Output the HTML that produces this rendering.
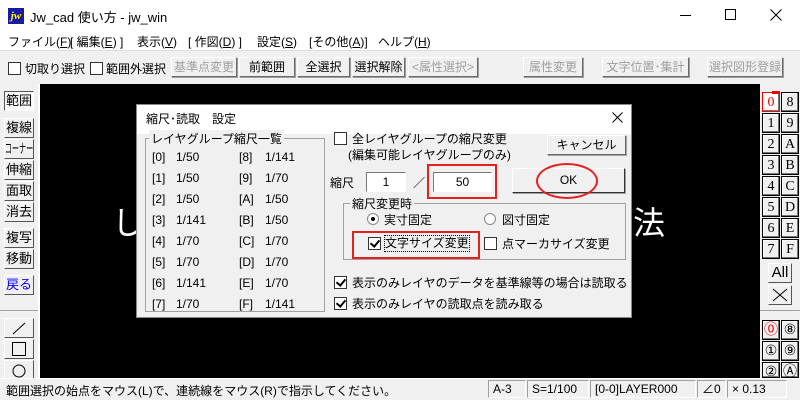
<!DOCTYPE html>
<html><head><meta charset="utf-8"><style>
*{box-sizing:border-box;margin:0;padding:0}
body{width:800px;height:400px;overflow:hidden;background:#f0f0f0;font-family:"Liberation Sans","Noto Sans CJK JP","IPAGothic",sans-serif;font-size:12px;color:#000;position:relative}
.a{position:absolute;white-space:nowrap}
.btn{position:absolute;background:#f0f0f0;border:1px solid;border-color:#fff #696969 #696969 #fff;box-shadow:1px 1px 0 #a0a0a0;text-align:center;line-height:18px;font-size:12px}
.dis{color:#a0a0a0}
.cb{position:absolute;width:13px;height:13px;border:1px solid #333;background:#fff}
.ck::after{content:"";position:absolute;left:3px;top:0px;width:4px;height:7px;border:solid #000;border-width:0 2px 2px 0;transform:rotate(40deg)}
.lb{position:absolute;width:30px;height:20px;background:#f0f0f0;border:1px solid;border-color:#fff #555 #555 #fff;text-align:center;line-height:18px;font-size:13px;overflow:hidden}
.rb{position:absolute;width:18px;height:20px;background:#f0f0f0;border:1px solid #000;box-shadow:inset -1px -1px 0 #777,inset 1px 1px 0 #fff;text-align:center;line-height:19px;font-family:"Liberation Serif",serif;font-size:14px}
.sf{position:absolute;top:380px;height:18px;border:1px solid;border-color:#a0a0a0 #fff #fff #a0a0a0;line-height:16px;padding-left:4px;font-size:12px}
.c{position:absolute;line-height:21px;font-size:12px}
</style></head><body>
<div class="a" style="left:0;top:0;width:800px;height:30px;background:#fff"></div>
<div class="a" style="left:8px;top:8px;width:16px;height:16px;background:#1a1aa0;color:#ff0;font:italic bold 11px 'Liberation Serif',serif;line-height:16px;text-align:center">jw</div>
<div class="a" style="left:30px;top:7px;font-size:13px">Jw_cad 使い方 - jw_win</div>
<div class="a" style="left:680px;top:15px;width:11px;height:1px;background:#000"></div>
<div class="a" style="left:725px;top:9px;width:11px;height:11px;border:1px solid #000"></div>
<svg class="a" style="left:770px;top:9px" width="12" height="12"><path d="M0.5 0.5L11.5 11.5M11.5 0.5L0.5 11.5" stroke="#000" stroke-width="1"/></svg>
<div class="a" style="left:0;top:30px;width:800px;height:20px;background:#fff"></div>
<div class="a" style="left:8px;top:33px">ファイル(<u>F</u>)</div>
<div class="a" style="left:70px;top:33px">[ 編集(<u>E</u>) ]</div>
<div class="a" style="left:137px;top:33px">表示(<u>V</u>)</div>
<div class="a" style="left:188px;top:33px">[ 作図(<u>D</u>) ]</div>
<div class="a" style="left:257px;top:33px">設定(<u>S</u>)</div>
<div class="a" style="left:309px;top:33px">[その他(<u>A</u>)]</div>
<div class="a" style="left:378px;top:33px">ヘルプ(<u>H</u>)</div>
<div class="a" style="left:0;top:50px;width:800px;height:1px;background:#ddd"></div>
<div class="cb" style="left:8px;top:62px"></div><div class="a" style="left:25px;top:60px">切取り選択</div>
<div class="cb" style="left:90px;top:62px"></div><div class="a" style="left:106px;top:60px">範囲外選択</div>
<div class="btn dis" style="left:171px;top:57px;width:66px;height:20px">基準点変更</div>
<div class="btn" style="left:239px;top:57px;width:56px;height:20px">前範囲</div>
<div class="btn" style="left:297px;top:57px;width:53px;height:20px">全選択</div>
<div class="btn" style="left:352px;top:57px;width:53px;height:20px">選択解除</div>
<div class="btn dis" style="left:408px;top:57px;width:70px;height:20px">&lt;属性選択&gt;</div>
<div class="btn dis" style="left:523px;top:57px;width:60px;height:20px">属性変更</div>
<div class="btn dis" style="left:602px;top:57px;width:87px;height:20px">文字位置･集計</div>
<div class="btn dis" style="left:707px;top:57px;width:76px;height:20px">選択図形登録</div>
<div class="a" style="left:40px;top:84px;width:720px;height:294px;background:#000"></div>
<div class="a" style="left:112px;top:198px;color:#fff;font-size:32px">し</div>
<div class="a" style="left:633px;top:198px;color:#fff;font-size:32px">法</div>
<div class="a" style="left:38px;top:84px;width:2px;height:294px;background:#fff"></div>
<div class="lb" style="left:4px;top:91px;background:#fafafa;border-color:#555 #fff #fff #555">範囲</div>
<div class="lb" style="left:4px;top:118px">複線</div>
<div class="lb" style="left:4px;top:139px"><span style="display:inline-block;transform:scaleX(0.55);transform-origin:center;margin:0 -20px">コーナー</span></div>
<div class="lb" style="left:4px;top:160px">伸縮</div>
<div class="lb" style="left:4px;top:181px">面取</div>
<div class="lb" style="left:4px;top:202px">消去</div>
<div class="lb" style="left:4px;top:228px">複写</div>
<div class="lb" style="left:4px;top:249px">移動</div>
<div class="lb" style="left:4px;top:275px;color:#00f">戻る</div>
<div class="a" style="left:0;top:310px;width:38px;height:1px;background:#a0a0a0"></div>
<div class="lb" style="left:4px;top:318px"><svg width="28" height="18"><line x1="8" y1="15" x2="20" y2="4" stroke="#000"/></svg></div>
<div class="lb" style="left:4px;top:339px"><svg width="28" height="18"><rect x="7.5" y="2.5" width="13" height="13" fill="none" stroke="#000"/></svg></div>
<div class="lb" style="left:4px;top:360px"><svg width="28" height="18"><circle cx="14" cy="10" r="6" fill="none" stroke="#000"/></svg></div>
<div class="a" style="left:760px;top:84px;width:40px;height:294px;background:#f0f0f0"></div>
<div class="rb" style="left:762px;top:92px;background:#fff;color:#e00;border-color:#e00">0</div><div class="a" style="left:772px;top:91px;width:8px;height:3px;background:#e00"></div>
<div class="rb" style="left:781px;top:92px">8</div>
<div class="rb" style="left:762px;top:113px">1</div><div class="rb" style="left:781px;top:113px">9</div>
<div class="rb" style="left:762px;top:134px">2</div><div class="rb" style="left:781px;top:134px">A</div>
<div class="rb" style="left:762px;top:155px">3</div><div class="rb" style="left:781px;top:155px">B</div>
<div class="rb" style="left:762px;top:176px">4</div><div class="rb" style="left:781px;top:176px">C</div>
<div class="rb" style="left:762px;top:197px">5</div><div class="rb" style="left:781px;top:197px">D</div>
<div class="rb" style="left:762px;top:218px">6</div><div class="rb" style="left:781px;top:218px">E</div>
<div class="rb" style="left:762px;top:239px">7</div><div class="rb" style="left:781px;top:239px">F</div>
<div class="lb" style="left:768px;top:263px;width:24px;font-size:15px">All</div>
<div class="lb" style="left:768px;top:285px;width:24px"><svg width="22" height="18"><path d="M4 3L18 15M18 3L4 15" stroke="#000"/></svg></div>
<div class="a" style="left:760px;top:310px;width:40px;height:1px;background:#a0a0a0"></div>
<div class="rb" style="left:762px;top:320px;color:#e00">⓪</div><div class="rb" style="left:781px;top:320px">⑧</div>
<div class="rb" style="left:762px;top:341px">①</div><div class="rb" style="left:781px;top:341px">⑨</div>
<div class="rb" style="left:762px;top:362px;height:16px;overflow:hidden">②</div><div class="rb" style="left:781px;top:362px;height:16px;overflow:hidden">Ⓐ</div>
<div class="a" style="left:0;top:378px;width:800px;height:22px;background:#f0f0f0;border-top:1px solid #fff"></div>
<div class="a" style="left:6px;top:382px">範囲選択の始点をマウス(L)で、連続線をマウス(R)で指示してください。</div>
<div class="sf" style="left:488px;width:38px">A-3</div>
<div class="sf" style="left:527px;width:62px">S=1/100</div>
<div class="sf" style="left:590px;width:106px">[0-0]LAYER000</div>
<div class="sf" style="left:697px;width:29px">∠0</div>
<div class="sf" style="left:727px;width:60px">× 0.13</div>
<div class="a" style="left:136px;top:104px;width:496px;height:214px;background:#f0f0f0;border:1px solid #888"></div>
<div class="a" style="left:137px;top:105px;width:494px;height:29px;background:#fff"></div>
<div class="a" style="left:146px;top:110px">縮尺･読取　設定</div>
<svg class="a" style="left:612px;top:112px" width="11" height="11"><path d="M0.5 0.5L10.5 10.5M10.5 0.5L0.5 10.5" stroke="#000"/></svg>
<div class="a" style="left:145px;top:138px;width:180px;height:174px;border:1px solid #a0a0a0"></div>
<div class="a" style="left:149px;top:130px;background:#f0f0f0;padding:0 2px">レイヤグループ縮尺一覧</div>
<div class="c" style="left:152px;top:147px">[0]<br>[1]<br>[2]<br>[3]<br>[4]<br>[5]<br>[6]<br>[7]</div>
<div class="c" style="left:176px;top:147px">1/50<br>1/50<br>1/50<br>1/141<br>1/70<br>1/70<br>1/141<br>1/70</div>
<div class="c" style="left:239px;top:147px">[8]<br>[9]<br>[A]<br>[B]<br>[C]<br>[D]<br>[E]<br>[F]</div>
<div class="c" style="left:265px;top:147px">1/141<br>1/70<br>1/50<br>1/50<br>1/70<br>1/70<br>1/70<br>1/141</div>
<div class="cb" style="left:334px;top:132px"></div>
<div class="a" style="left:352px;top:130px">全レイヤグループの縮尺変更</div>
<div class="a" style="left:348px;top:146px">(編集可能レイヤグループのみ)</div>
<div class="btn" style="left:547px;top:135px;width:79px;height:20px">キャンセル</div>
<div class="a" style="left:330px;top:174px">縮尺</div>
<div class="a" style="left:366px;top:172px;width:40px;height:20px;background:#fff;border:1px solid;border-color:#777 #fff #fff #777;text-align:center;line-height:18px">1</div>
<div class="a" style="left:413px;top:174px">／</div>
<div class="a" style="left:433px;top:172px;width:59px;height:20px;background:#fff;border:1px solid;border-color:#777 #fff #fff #777;text-align:center;line-height:18px">50</div>
<div class="a" style="left:427px;top:164px;width:70px;height:35px;border:2px solid #e52020"></div>
<div class="btn" style="left:512px;top:168px;width:113px;height:25px;line-height:23px;border-color:#fff #333 #333 #fff">OK</div>
<div class="a" style="left:536px;top:163px;width:62px;height:36px;border:2px solid #e52020;border-radius:50%"></div>
<div class="a" style="left:343px;top:203px;width:283px;height:57px;border:1px solid #a0a0a0"></div>
<div class="a" style="left:350px;top:195px;background:#f0f0f0;padding:0 2px">縮尺変更時</div>
<div class="a" style="left:367px;top:213px;width:12px;height:12px;border-radius:50%;background:#fff;border:1px solid #888"></div><div class="a" style="left:371px;top:217px;width:4px;height:4px;border-radius:50%;background:#000"></div>
<div class="a" style="left:384px;top:211px">実寸固定</div>
<div class="a" style="left:484px;top:213px;width:12px;height:12px;border-radius:50%;background:#fff;border:1px solid #888"></div>
<div class="a" style="left:502px;top:211px">図寸固定</div>
<div class="a" style="left:352px;top:231px;width:128px;height:28px;border:2px solid #e52020"></div>
<div class="cb ck" style="left:368px;top:237px"></div>
<div class="a" style="left:384px;top:235px;border:1px dotted #000;line-height:15px">文字サイズ変更</div>
<div class="cb" style="left:484px;top:237px"></div>
<div class="a" style="left:502px;top:235px">点マーカサイズ変更</div>
<div class="cb ck" style="left:334px;top:276px"></div>
<div class="a" style="left:352px;top:274px">表示のみレイヤのデータを基準線等の場合は読取る</div>
<div class="cb ck" style="left:334px;top:297px"></div>
<div class="a" style="left:352px;top:295px">表示のみレイヤの読取点を読み取る</div>
</body></html>
